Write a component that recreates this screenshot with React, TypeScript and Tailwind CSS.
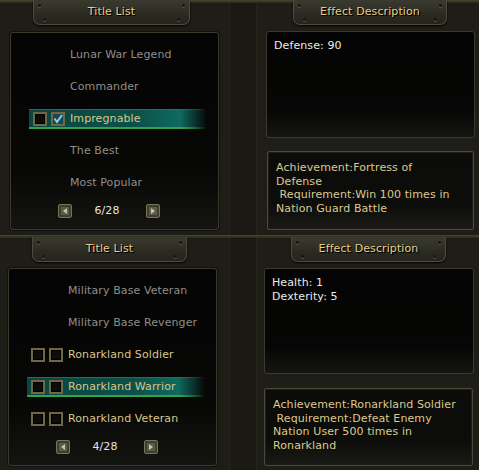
import React from "react";

type Item = { label: string; boxes?: boolean; checked?: boolean; active?: boolean };

const topItems: Item[] = [
  { label: "Lunar War Legend" },
  { label: "Commander" },
  { label: "Impregnable", boxes: true, checked: true, active: true },
  { label: "The Best" },
  { label: "Most Popular" },
];

const bottomItems: Item[] = [
  { label: "Military Base Veteran" },
  { label: "Military Base Revenger" },
  { label: "Ronarkland Soldier", boxes: true },
  { label: "Ronarkland Warrior", boxes: true, active: true },
  { label: "Ronarkland Veteran", boxes: true },
];

function Rivet({ className }: { className: string }) {
  return <span className={`absolute w-[3px] h-[3px] rounded-full bg-[#15140f] shadow-[0_1px_0_#5a5844] ${className}`} />;
}

function Tab({ label, className }: { label: string; className: string }) {
  return (
    <div
      className={`relative h-[25px] rounded-b-[7px] border border-t-0 border-[#4e4c3c] bg-[linear-gradient(180deg,#3b3a2f_0%,#2c2b23_60%,#24231c_100%)] shadow-[0_1px_2px_#000] flex items-center justify-center ${className}`}
    >
      <Rivet className="left-[4px] top-[4px]" />
      <Rivet className="right-[4px] top-[4px]" />
      <Rivet className="left-[9px] bottom-[3px]" />
      <Rivet className="right-[9px] bottom-[3px]" />
      <span className="text-[#e6cf8c] text-[11px] [text-shadow:1px_1px_0_#000,1px_1px_1px_#000]">{label}</span>
    </div>
  );
}

function Box({ checked }: { checked?: boolean }) {
  return (
    <span className="w-[14px] h-[14px] border-2 border-[#6e6843] bg-[#0c0c0a] shadow-[inset_0_0_0_1px_#000] flex items-center justify-center">
      {checked ? (
        <svg width="10" height="10" viewBox="0 0 10 10">
          <rect x="0" y="0" width="10" height="10" fill="#25414d" />
          <path d="M1.5 4.5 L4 8 L9 1" stroke="#6fd6f0" strokeWidth="2" fill="none" />
        </svg>
      ) : null}
    </span>
  );
}

function Row({ item }: { item: Item }) {
  return (
    <div className="h-[32px] flex items-center">
      <div
        className={`relative ml-[18px] w-[178px] h-[20px] flex items-center ${
          item.active
            ? "bg-[linear-gradient(90deg,#094640_0%,#0b5149_60%,#0f6a5f_85%,rgba(15,106,95,0)_100%)]"
            : ""
        }`}
      >
        {item.active ? (
          <>
            <span className="absolute left-0 right-0 top-0 h-px bg-[linear-gradient(90deg,#1f7a38_0%,#1f7a38_85%,rgba(31,122,56,0)_100%)]" />
            <span className="absolute left-0 right-0 bottom-0 h-[2px] bg-[linear-gradient(90deg,#35a343_0%,#35a343_85%,rgba(53,163,67,0)_100%)]" />
          </>
        ) : null}
        {item.boxes ? (
          <div className="flex items-center gap-[4px] ml-[4px] mr-[5px]">
            <Box />
            <Box checked={item.checked} />
          </div>
        ) : (
          <div className="w-[41px]" />
        )}
        <span className={`text-[11px] ${item.boxes ? "text-[#d8c78c]" : "text-[#8e8e8a]"}`}>{item.label}</span>
      </div>
    </div>
  );
}

function Arrow({ dir }: { dir: "l" | "r" }) {
  return (
    <span className="w-[14px] h-[14px] rounded-[2px] bg-[#3f3f2e] border border-[#75755a] flex items-center justify-center">
      <span className="w-[8px] h-[8px] bg-[#5c5c48] flex items-center justify-center">
        <svg width="6" height="6" viewBox="0 0 6 6">
          {dir === "l" ? <path d="M5 0 L1 3 L5 6 Z" fill="#c4c4b4" /> : <path d="M1 0 L5 3 L1 6 Z" fill="#c4c4b4" />}
        </svg>
      </span>
    </span>
  );
}

function ListPanel({ items, page, className }: { items: Item[]; page: string; className: string }) {
  return (
    <div
      className={`w-[209px] h-[198px] rounded-[3px] border border-[#3a392b] bg-[linear-gradient(180deg,#040404_0%,#070706_70%,#141410_100%)] shadow-[0_0_0_1px_#121110] pt-[6px] ${className}`}
    >
      {items.map((it) => (
        <Row key={it.label} item={it} />
      ))}
      <div className="h-[24px] flex items-center">
        <div className="ml-[47px]">
          <Arrow dir="l" />
        </div>
        <span className="ml-[22px] w-[26px] text-center text-[11px] text-[#e4e4e0]">{page}</span>
        <div className="ml-[26px]">
          <Arrow dir="r" />
        </div>
      </div>
    </div>
  );
}

function Half({
  items,
  page,
  effects,
  achievement,
  variant,
}: {
  items: Item[];
  page: string;
  effects: string[];
  achievement: string[];
  variant: "top" | "bottom";
}) {
  const top = variant === "top";
  return (
    <div className="relative h-[235px] flex">
      <span className="absolute left-0 right-0 top-0 h-[3px] bg-[linear-gradient(180deg,#4a4829,#27261b)]" />
      <div className="w-[229px] flex flex-col">
        <Tab label="Title List" className={top ? "ml-[33px] w-[157px]" : "mt-[2px] ml-[32px] w-[155px]"} />
        <ListPanel items={items} page={page} className={top ? "ml-[10px] mt-[7px]" : "ml-[8px] mt-[6px]"} />
      </div>
      <div className="w-[28px] bg-[#1a1914] border-x border-[#27261d]" />
      <div className="flex-1 flex flex-col">
        <Tab label="Effect Description" className={top ? "ml-[36px] w-[154px]" : "mt-[2px] ml-[34px] w-[155px]"} />
        <div
          className={`rounded-[3px] border border-[#3a392b] bg-[linear-gradient(180deg,#040404_0%,#060605_75%,#151513_100%)] pl-[7px] pt-[7px] text-[11px] leading-[14px] text-[#ebebe6] ${
            top ? "ml-[9px] mt-[6px] w-[209px] h-[107px]" : "ml-[7px] mt-[6px] w-[210px] h-[106px]"
          }`}
        >
          {effects.map((e) => (
            <div key={e}>{e}</div>
          ))}
        </div>
        <div
          className={`rounded-[2px] border border-[#4b4a38] shadow-[inset_0_0_0_1px_#1d1c16] bg-[linear-gradient(180deg,#0b0b09_0%,#0d0d0b_70%,#1a1a15_100%)] pl-[8px] pt-[9px] text-[11px] leading-[13.5px] text-[#ddc98e] whitespace-pre ${
            top ? "ml-[10px] mt-[13px] w-[207px] h-[79px]" : "ml-[7px] mt-[14px] w-[209px] h-[78px]"
          }`}
        >
          {achievement.map((a) => (
            <div key={a}>{a}</div>
          ))}
        </div>
      </div>
    </div>
  );
}

export default function App() {
  return (
    <div className="w-[479px] h-[470px] overflow-hidden bg-[#1e1d17] tracking-[0.1px] font-['DejaVu_Sans',sans-serif]">
      <Half
        variant="top"
        items={topItems}
        page="6/28"
        effects={["Defense: 90"]}
        achievement={["Achievement:Fortress of", "Defense", " Requirement:Win 100 times in", "Nation Guard Battle"]}
      />
      <Half
        variant="bottom"
        items={bottomItems}
        page="4/28"
        effects={["Health: 1", "Dexterity: 5"]}
        achievement={["Achievement:Ronarkland Soldier", " Requirement:Defeat Enemy", "Nation User 500 times in", "Ronarkland"]}
      />
    </div>
  );
}
